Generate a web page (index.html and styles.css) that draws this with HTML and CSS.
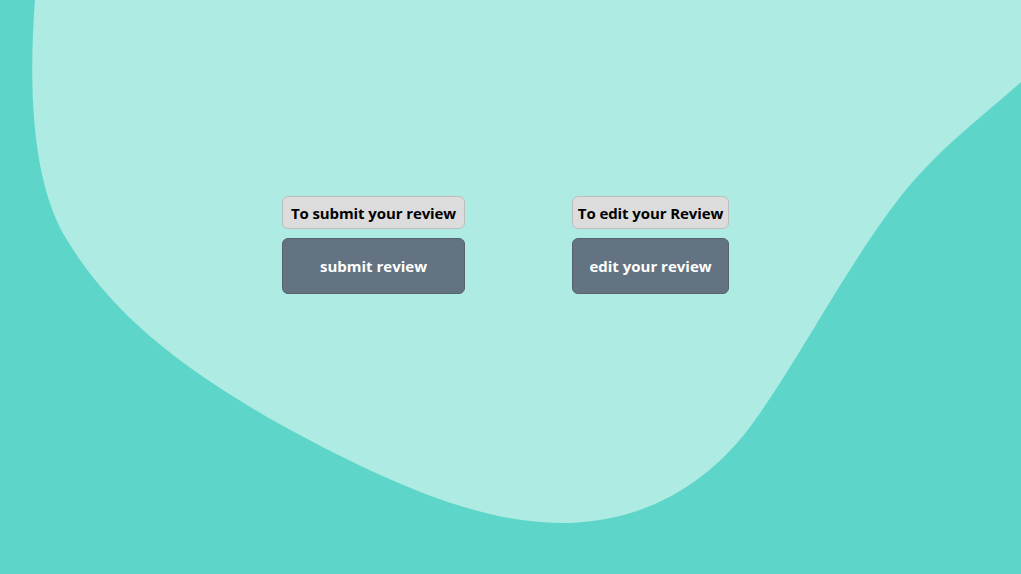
FILE: index.html
```html
<!DOCTYPE html>
<html>
<head>
<meta charset="utf-8">
<link rel="stylesheet" href="styles.css">
</head>
<body>
<svg class="blob" viewBox="0 0 1021 574" preserveAspectRatio="none" aria-hidden="true">
  <path d="M35 0 C29 80 30 180 67 240 C110 310 170 360 267 417 C380 480 480 525 567 523 C650 521 710 480 750 427 C800 360 860 240 917 177 C950 140 990 110 1021 82 L1021 0 Z" fill="#adebe3"/>
</svg>
<main class="actions">
  <div class="action action-submit">
    <div class="label">To submit your review</div>
    <button class="btn">submit review</button>
  </div>
  <div class="action action-edit">
    <div class="label">To edit your Review</div>
    <button class="btn">edit your review</button>
  </div>
</main>
</body>
</html>
```
FILE: styles.css
```css
html, body {
  margin: 0;
  height: 100%;
}
body {
  background: #5dd6c9;
  font-family: "Open Sans", "Noto Sans", sans-serif;
  overflow: hidden;
  position: relative;
}
.blob {
  position: absolute;
  inset: 0;
  width: 100%;
  height: 100%;
  z-index: 0;
}
.actions {
  position: relative;
  z-index: 1;
  display: flex;
  justify-content: center;
  gap: 107px;
  padding-top: 196px;
  padding-right: 10px;
}
.action {
  display: flex;
  flex-direction: column;
  gap: 9px;
}
.action-submit { width: 183px; }
.action-edit { width: 157px; }
.label {
  height: 33px;
  box-sizing: border-box;
  display: flex;
  align-items: center;
  justify-content: center;
  background: #dcdcdc;
  border: 1px solid #bdbdbd;
  border-radius: 6px;
  font-size: 15px;
  font-weight: 700;
  color: #000;
  white-space: nowrap;
  letter-spacing: -0.1px;
}
.btn {
  height: 56px;
  background: #637381;
  border: 1px solid #56636f;
  border-radius: 6px;
  color: #fff;
  font-family: inherit;
  font-size: 15px;
  font-weight: 700;
  padding: 0;
}
```
